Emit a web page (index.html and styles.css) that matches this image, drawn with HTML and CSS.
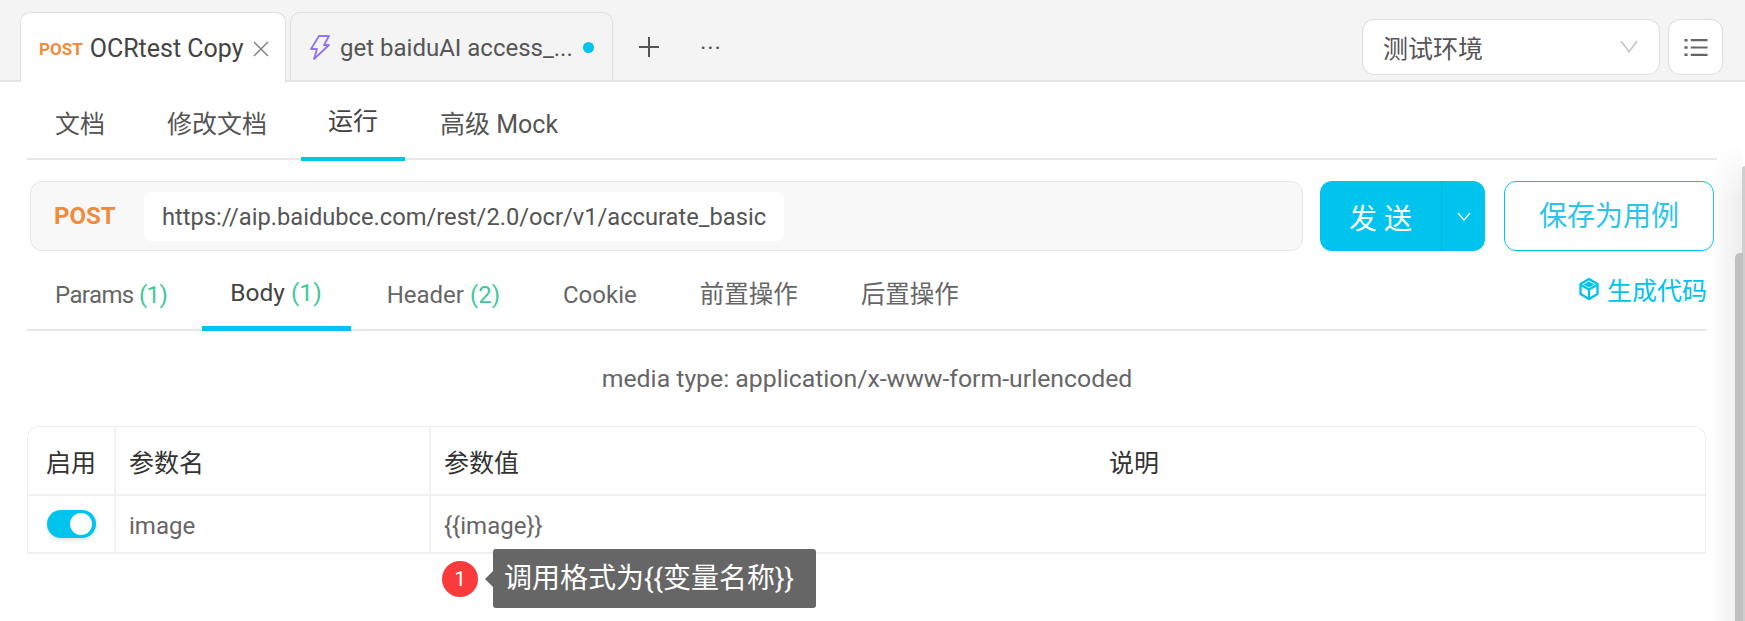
FILE: index.html
```html
<!DOCTYPE html>
<html lang="zh">
<head>
<meta charset="utf-8">
<title>OCRtest Copy</title>
<link rel="stylesheet" href="styles.css">
</head>
<body>
<header class="topbar">
  <div class="tab tab-active">
    <span class="method-small">POST</span>
    <span class="tab-title">OCRtest Copy</span>
    <svg class="tab-close" viewBox="0 0 16 16" width="16" height="16"><path d="M1 1 15 15M15 1 1 15" fill="none" stroke="#808080" stroke-width="1.4"/></svg>
  </div>
  <div class="tab tab-other">
    <svg class="bolt" viewBox="-1 -1 20 25" width="20" height="25"><path d="M8 0h10l-5 9h5L3 23l3-10H0z" fill="none" stroke="#9373ee" stroke-width="1.8" stroke-linejoin="round"/></svg>
    <span class="tab-name">get baiduAI access_...</span>
    <span class="dot"></span>
  </div>
  <svg class="plus" viewBox="0 0 22 22" width="22" height="22"><path d="M11 1v20M1 11h20" stroke="#555" stroke-width="2"/></svg>
  <span class="more">···</span>
  <div class="top-right">
    <div class="env"><span>测试环境</span>
      <svg viewBox="0 0 18 14" width="18" height="14"><path d="M1 1l8 11 8-11" fill="none" stroke="#c4c4c4" stroke-width="1.5"/></svg>
    </div>
    <div class="list-btn">
      <svg viewBox="0 0 24 20" width="26" height="21"><path d="M7 3h16M7 10h16M7 17h16" stroke="#666" stroke-width="2"/><path d="M1 3h3M1 10h3M1 17h3" stroke="#666" stroke-width="2.4"/></svg>
    </div>
  </div>
</header>
<main class="content">
  <nav class="subtabs">
    <span class="subtab">文档</span>
    <span class="subtab">修改文档</span>
    <span class="subtab active">运行</span>
    <span class="subtab">高级 Mock</span>
  </nav>
  <div class="request">
    <div class="urlbar">
      <span class="method">POST</span>
      <span class="url">https://aip.baidubce.com/rest/2.0/ocr/v1/accurate_basic</span>
    </div>
    <div class="send">
      <span class="send-label">发 送</span>
      <span class="send-arrow"><svg viewBox="0 0 16 10" width="14" height="9"><path d="M1 1l7 8 7-8" fill="none" stroke="#fff" stroke-width="1.4"/></svg></span>
    </div>
    <div class="save">保存为用例</div>
  </div>
  <nav class="reqtabs">
    <span class="reqtab params-tab">Params <em>(1)</em></span>
    <span class="reqtab active">Body <em>(1)</em></span>
    <span class="reqtab">Header <em>(2)</em></span>
    <span class="reqtab">Cookie</span>
    <span class="reqtab cjk">前置操作</span>
    <span class="reqtab cjk">后置操作</span>
    <span class="gen">
      <svg viewBox="0 0 20 24" width="20" height="24"><path d="M10 2 18.500 7v10L10 22l-8.500-5V7z" fill="none" stroke="#00c4ee" stroke-width="2.400" stroke-linejoin="round"/><path d="M2 8l8 4.500L18 8M10 12.500V21" fill="none" stroke="#00c4ee" stroke-width="2.200"/><path d="M10 4.500 15.500 7.500 10 10.500 4.500 7.500z" fill="#00c4ee"/></svg>
      生成代码
    </span>
  </nav>
  <p class="media">media type: application/x-www-form-urlencoded</p>
  <div class="params">
    <div class="row head">
      <div class="c c1">启用</div>
      <div class="c c2">参数名</div>
      <div class="c c3">参数值</div>
      <div class="c c4">说明</div>
    </div>
    <div class="row body-row">
      <div class="c c1"><span class="toggle"><span class="knob"></span></span></div>
      <div class="c c2">image</div>
      <div class="c c3">{{image}}</div>
      <div class="c c4"></div>
    </div>
    <div class="note">
      <span class="badge">1</span>
      <span class="tip">调用格式为{{变量名称}}</span>
    </div>
  </div>
  <div class="shade"></div>
  <div class="rail"></div>
  <div class="scrollbar"></div>
</main>
</body>
</html>
```
FILE: styles.css
```css
* { box-sizing: border-box; }
html, body { margin: 0; height: 100%; overflow: hidden; }
body {
  width: 1745px; height: 621px; background: #fff; color: #555;
  font-family: Roboto, "Noto Sans CJK SC", sans-serif;
  font-size: 25px;
}
.topbar {
  height: 82px; background: #f4f4f4; border-bottom: 2px solid #e5e5e5;
  display: flex; align-items: flex-end; padding-left: 20px; position: relative;
}
.tab {
  height: 68px; border: 1px solid #dedede; border-bottom: 0; padding-top: 2px;
  border-radius: 10px 10px 0 0; display: flex; align-items: center;
}
.tab-active {
  width: 266px; background: #fff; padding-left: 18px; margin-bottom: -2px; height: 70px;
}
.method-small { color: #f08a3c; font-size: 17px; font-weight: 700; margin-right: 7px; }
.tab-title { color: #444; font-size: 25px; white-space: nowrap; }
.tab-close { margin-left: 9px; }
.tab-other { width: 323px; margin-left: 4px; background: #f4f4f4; padding-left: 19px; }
.bolt { margin-right: 10px; }
.tab-name { color: #555; font-size: 24px; white-space: nowrap; }
.dot { width: 11px; height: 11px; border-radius: 50%; background: #00c4ee; margin-left: 10px; }
.plus { margin: 0 0 22px 25px; }
.more { margin: 0 0 18px 40px; font-size: 24px; color: #555; letter-spacing: 1px; }
.top-right { margin-left: auto; display: flex; gap: 8px; padding-right: 22px; align-self: flex-start; margin-top: 19px; }
.env {
  width: 298px; height: 56px; background: #fff; border: 1px solid #dcdcdc; border-radius: 12px;
  display: flex; align-items: center; justify-content: space-between; padding: 0 21px 0 20px;
  font-size: 25px; color: #555;
}
.list-btn {
  width: 55px; height: 56px; background: #fff; border: 1px solid #dcdcdc; border-radius: 12px;
  display: flex; align-items: center; justify-content: center;
}
.content { position: relative; height: 539px; padding: 0 0 0 27px; }
.subtabs {
  height: 78px; width: 1690px; border-bottom: 2px solid #e8e8e8; display: flex; gap: 6px;
}
.subtab { padding: 0 28px; line-height: 85px; font-size: 25px; color: #555; height: 79px; }
.subtab.active { color: #444; line-height: 80px; border-bottom: 4px solid #00c4ee; padding: 0 27px 0 27px; margin-right: 1px; }
.request { display: flex; margin-top: 21px; padding-left: 3px; }
.urlbar {
  width: 1273px; height: 70px; background: #f8f8f8; border: 1px solid #e8e8e8; border-radius: 12px;
  display: flex; align-items: center; padding-left: 23px;
}
.method { color: #f08a3c; font-weight: 700; font-size: 24px; width: 90px; }
.url {
  background: #fff; border-radius: 8px; height: 49px; line-height: 51px; padding: 0 18px; color: #555; font-size: 23.700px;
  white-space: nowrap;
}
.send {
  width: 165px; height: 70px; margin-left: 17px; background: #00c4ee; border-radius: 12px; color: #fff;
  display: flex; align-items: center;
}
.send-label { width: 121px; text-align: center; font-size: 28px; padding-top: 2px; }
.send-arrow {
  flex: 1; height: 100%; border-left: 1px solid #10b4d8; display: flex; align-items: center; justify-content: center;
}
.save {
  width: 210px; height: 70px; margin-left: 19px; border: 1px solid #00c4ee; border-radius: 12px;
  color: #2cc4ec; font-size: 28px; text-align: center; line-height: 70px;
}
.reqtabs {
  width: 1680px; height: 80px; border-bottom: 2px solid #e8e8e8; display: flex; gap: 7px; position: relative;
}
.reqtab { padding: 0 28px; font-size: 24px; color: #666; line-height: 88px; height: 80px; }
.reqtab em { font-style: normal; color: #3ec99a; }
.reqtab.cjk { font-size: 24.500px; }
.params-tab { letter-spacing: -0.600px; }
.reqtab.active { color: #444; font-size: 24.500px; line-height: 83px; border-bottom: 5px solid #00c4ee; padding: 0 29px 0 28px; margin-right: 1px; }
.gen {
  margin-left: auto; color: #00c4ee; font-size: 25px; display: flex; align-items: center; gap: 8px; height: 76px;
}
.media { margin: 0; width: 1680px; text-align: center; font-size: 24.800px; color: #666; line-height: 32px; padding-top: 32px; }
.params {
  position: relative; width: 1679px; margin: 31px 0 0 0; border: 1px solid #eee; border-bottom: 0; border-radius: 12px 12px 0 0;
}
.row { display: flex; }
.head { height: 69px; border-bottom: 2px solid #f0f0f0; color: #333; }
.body-row { height: 58px; border-bottom: 2px solid #f0f0f0; color: #666; }
.c { display: flex; align-items: center; padding-left: 13px; font-size: 25px; }
.c1 { width: 88px; padding-left: 0; justify-content: center; border-right: 2px solid #f2f2f2; }
.c2 { width: 315px; border-right: 2px solid #f2f2f2; }
.c3 { width: 665px; }
.c4 { flex: 1; }
.body-row .c { font-size: 24px; padding-top: 3px; }
.body-row .c1 { padding-top: 0; }
.toggle {
  width: 49px; height: 28px; border-radius: 14px; background: #00c4ee; position: relative; display: block;
  box-shadow: 0 2px 4px rgba(0,0,0,.12);
}
.knob { position: absolute; right: 4px; top: 3px; width: 22px; height: 22px; border-radius: 50%; background: #fff; }
.note { position: absolute; left: 414px; top: 122px; display: flex; align-items: center; }
.badge {
  width: 36px; height: 36px; border-radius: 50%; background: #f93b3b; color: #fff; font-size: 20px;
  display: flex; align-items: center; justify-content: center;
}
.tip {
  position: relative; margin-left: 15px; width: 323px; height: 59px; background: #666; color: #fff; border-radius: 3px;
  font-size: 28px; line-height: 59px; padding-left: 11px; white-space: nowrap;
}
.tip::before {
  content: ""; position: absolute; left: -8px; top: 22px; border: 8px solid transparent; border-left: 0; border-right-color: #666;
}
.shade {
  position: absolute; right: 3px; top: 60px; width: 32px; height: 479px;
  background: linear-gradient(to right, rgba(235,235,235,0), rgba(235,235,235,.9));
  -webkit-mask-image: linear-gradient(to bottom, transparent, #000 60px);
  pointer-events: none;
}
.rail {
  position: absolute; right: 0; top: 84px; width: 3px; height: 455px; background: #cfcfcf; border-radius: 3px 0 0 0;
}
.scrollbar {
  position: absolute; right: 2px; top: 171px; width: 8px; height: 368px; background: #c0c0c0; border-radius: 5px 0 0 0;
}
```
